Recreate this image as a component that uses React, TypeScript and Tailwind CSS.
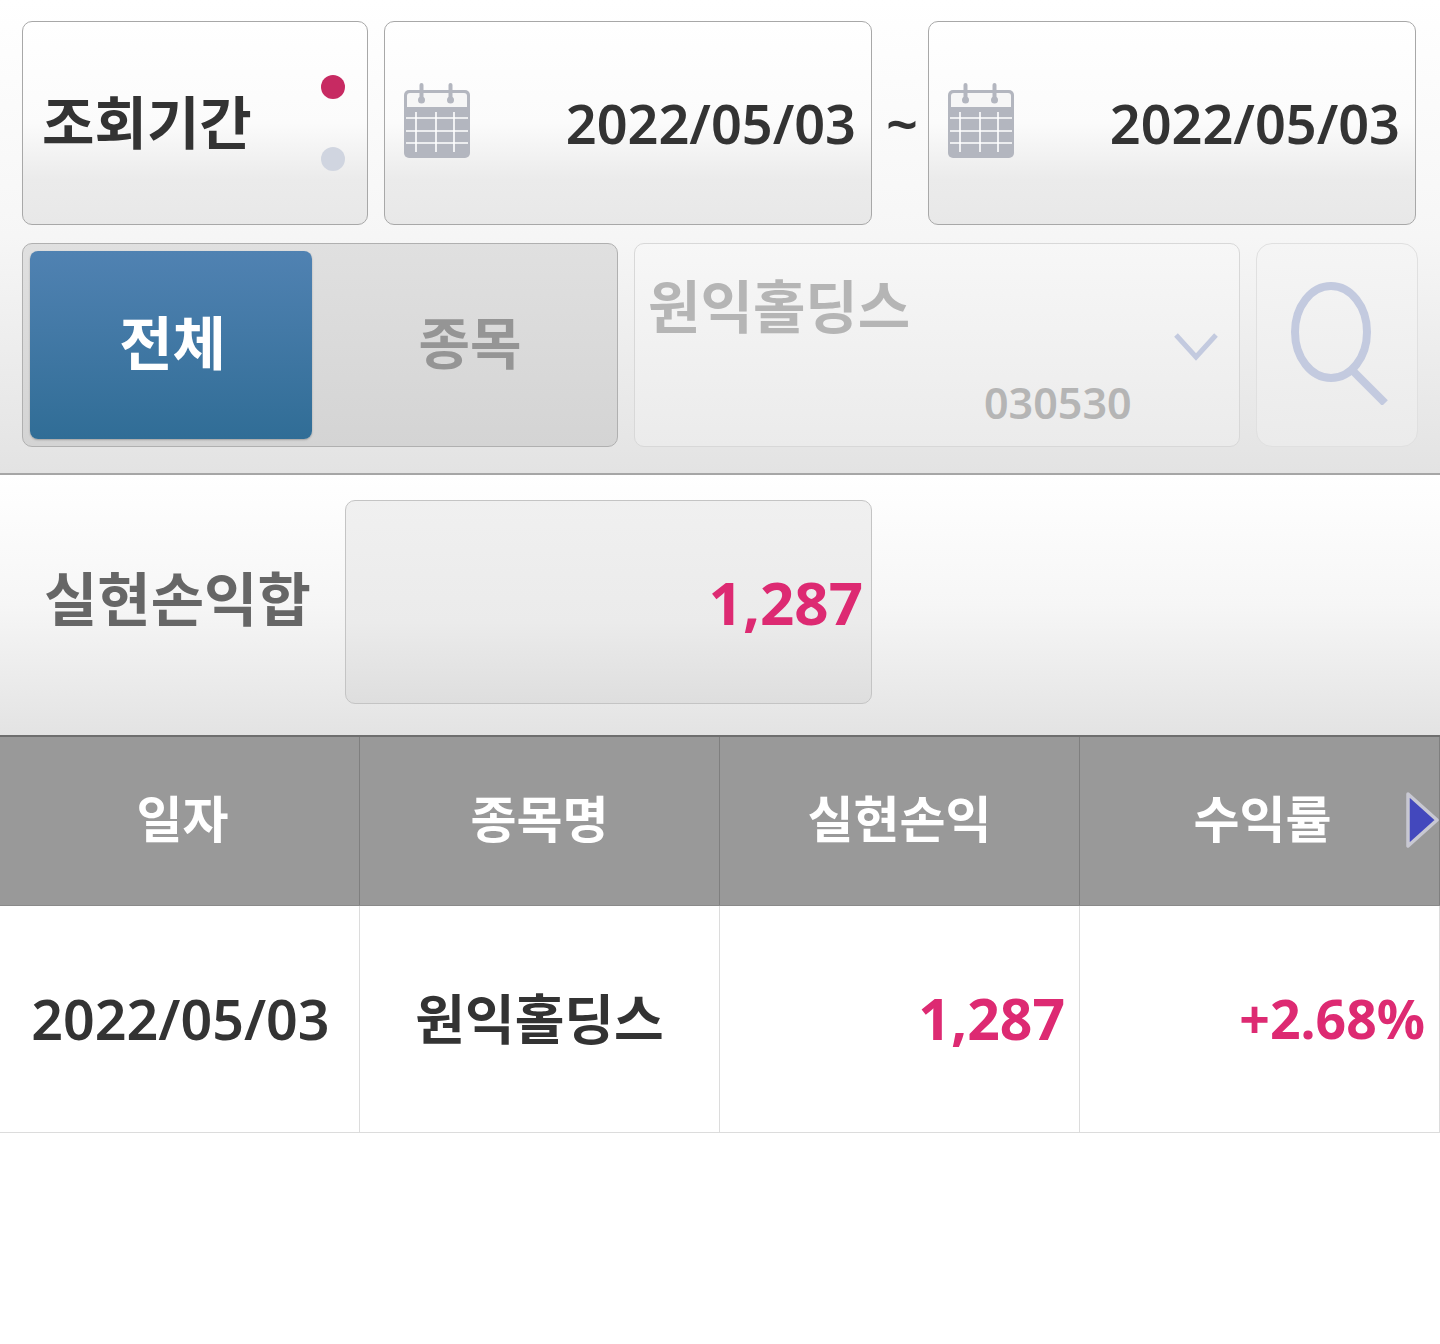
const font = "font-['Noto_Sans','Noto_Sans_CJK_KR',sans-serif]";
const boxBg = "bg-[linear-gradient(to_bottom,#ffffff_0%,#fbfbfb_50%,#ebebeb_78%,#e8e8e8_100%)]";
const panelBg = "bg-[linear-gradient(to_bottom,#ffffff_0%,#f6f6f6_50%,#e3e3e3_100%)]";

function Calendar() {
  return (
    <svg width="68" height="76" viewBox="0 0 68 76" className="shrink-0">
      <path d="M6 7h56a5 5 0 0 1 5 5v58a5 5 0 0 1-5 5H6a5 5 0 0 1-5-5V12a5 5 0 0 1 5-5z" fill="#b3b6bf" />
      <path d="M4 24V13a3 3 0 0 1 3-3h54a3 3 0 0 1 3 3v11z" fill="#f6f6f6" />
      <rect x="16.5" y="0" width="4" height="18" rx="2" fill="#b3b6bf" />
      <rect x="45.5" y="0" width="4" height="18" rx="2" fill="#b3b6bf" />
      <circle cx="18.5" cy="17" r="3.5" fill="#b3b6bf" />
      <circle cx="47.5" cy="17" r="3.5" fill="#b3b6bf" />
      <path d="M3 35h62M3 48h62M3 60h62M13 29v40M33 29v40M51 29v40" stroke="#ffffff" strokeWidth="1.6" fill="none" />
    </svg>
  );
}

function DateBox() {
  return (
    <div className={`w-[488px] h-[204px] rounded-[10px] border border-[#a8a8a8] ${boxBg} flex items-center pl-[18px] pr-[15px]`}>
      <div className="-mt-[5px]"><Calendar /></div>
      <div className="ml-auto text-[54px] leading-none font-semibold text-[#333333]">2022/05/03</div>
    </div>
  );
}

function HeaderCell({ label, arrow, shift }: { label: string; arrow?: boolean; shift?: boolean }) {
  return (
    <div className={`relative w-[360px] h-full border-r border-[#7f7f7f] flex items-center justify-center text-[50px] font-semibold text-white ${shift ? "pl-[6px]" : ""}`}>
      <span className="-mt-[4px]">{label}</span>
      {arrow && (
        <svg width="34" height="58" viewBox="0 0 34 58" className="absolute right-0 top-[54px]">
          <path d="M3 3 L32 29 L3 55 Z" fill="#4348bd" stroke="#c8c8d2" strokeWidth="3.5" strokeLinejoin="round" />
        </svg>
      )}
    </div>
  );
}

function BodyCell({ children, cls }: { children: React.ReactNode; cls: string }) {
  return (
    <div className={`w-[360px] h-full border-r border-[#dcdcdc] flex items-center ${cls}`}>{children}</div>
  );
}

export default function App() {
  return (
    <div className={`w-[1440px] h-[1344px] bg-white ${font}`}>
      <div className={`h-[475px] border-b-2 border-[#a6a6a6] ${panelBg} pt-[21px] pl-[22px]`}>
        <div className="flex h-[204px]">
          <div className={`w-[346px] h-[204px] rounded-[10px] border border-[#a8a8a8] ${boxBg} flex items-center pl-[19px] pr-[22px]`}>
            <span className="text-[57px] leading-none font-semibold text-[#333333] -mt-[2px] whitespace-nowrap">조회기간</span>
            <div className="ml-auto flex flex-col gap-[48px] -mt-[1px]">
              <div className="w-[24px] h-[24px] rounded-full bg-[#c72a62]" />
              <div className="w-[24px] h-[24px] rounded-full bg-[#d0d5e0]" />
            </div>
          </div>
          <div className="ml-[16px]"><DateBox /></div>
          <div className="w-[56px] flex items-center justify-center pl-[4px] text-[56px] font-semibold text-[#333333]">~</div>
          <DateBox />
        </div>
        <div className="flex mt-[18px] h-[204px]">
          <div className="w-[596px] h-[204px] rounded-[10px] border border-[#b0b0b0] bg-gradient-to-b from-[#e0e0e0] to-[#d4d4d4] p-[7px] flex">
            <div className="w-[282px] h-[188px] rounded-[8px] bg-gradient-to-b from-[#5082b2] to-[#306d96] shadow-[0_1px_2px_rgba(0,0,0,0.25)] flex items-center justify-center text-white text-[58px] font-bold">
              <span className="-mt-[6px] pl-[3px]">전체</span>
            </div>
            <div className="flex-1 flex items-center justify-center pl-[18px] text-[#959595] text-[56px] font-bold">
              <span className="-mt-[6px]">종목</span>
            </div>
          </div>
          <div className="relative ml-[16px] w-[606px] h-[204px] rounded-[10px] border border-[#d8d8d8] bg-gradient-to-b from-[#f7f7f7] to-[#ebebeb] pl-[13px] pt-[24px] text-[#b5b5b5]">
            <div className="text-[57px] leading-[76px] font-semibold whitespace-nowrap">원익홀딩스</div>
            <div className="mt-[30px] ml-[336px] text-[43px] leading-[58px] font-semibold">030530</div>
            <svg width="44" height="30" viewBox="0 0 44 30" className="absolute left-[539px] top-[88px]">
              <path d="M2 3 L22 25 L42 3" fill="none" stroke="#c3cadf" strokeWidth="5" />
            </svg>
          </div>
          <div className="ml-[16px] w-[162px] h-[204px] rounded-[16px] border border-[#e0e0e0] bg-gradient-to-b from-[#f5f5f5] to-[#ebebeb] flex items-center justify-center">
            <svg width="100" height="124" viewBox="0 0 100 124" className="ml-[4px] -mt-[4px]">
              <ellipse cx="42" cy="51" rx="36" ry="46" fill="none" stroke="#c3cadf" strokeWidth="8" />
              <path d="M64 90 L96 122" fill="none" stroke="#c3cadf" strokeWidth="8" />
            </svg>
          </div>
        </div>
      </div>

      <div className={`h-[260px] ${panelBg} flex items-start pt-[25px]`}>
        <div className="w-[345px] h-[204px] flex items-center pl-[44px] text-[58px] font-semibold text-[#666666] leading-none">
          <span className="-mt-[6px] whitespace-nowrap">실현손익합</span>
        </div>
        <div className="w-[527px] h-[204px] rounded-[10px] border border-[#c4c4c4] bg-[linear-gradient(to_bottom,#f0f0f0_0%,#ebebeb_60%,#dedede_100%)] flex items-center justify-end pr-[8px] text-[60px] font-bold text-[#dd2a72]">
          1,287
        </div>
      </div>

      <div className="h-[171px] bg-[#999999] border-t-2 border-[#6e6e6e] flex border-b border-b-[#8a8a8a]">
        <HeaderCell label="일자" shift />
        <HeaderCell label="종목명" />
        <HeaderCell label="실현손익" />
        <HeaderCell label="수익률" arrow shift />
      </div>

      <div className="h-[227px] flex border-b border-[#dcdcdc]">
        <BodyCell cls="justify-center pl-[2px] text-[55.5px] font-semibold text-[#333333]"><span>2022/05/03</span></BodyCell>
        <BodyCell cls="justify-center text-[54px] font-semibold text-[#333333]"><span>원익홀딩스</span></BodyCell>
        <BodyCell cls="justify-end pr-[14px] text-[57px] font-bold text-[#dd2a72]"><span>1,287</span></BodyCell>
        <BodyCell cls="justify-end pr-[14px] text-[53.5px] font-bold text-[#dd2a72]"><span>+2.68%</span></BodyCell>
      </div>
    </div>
  );
}
